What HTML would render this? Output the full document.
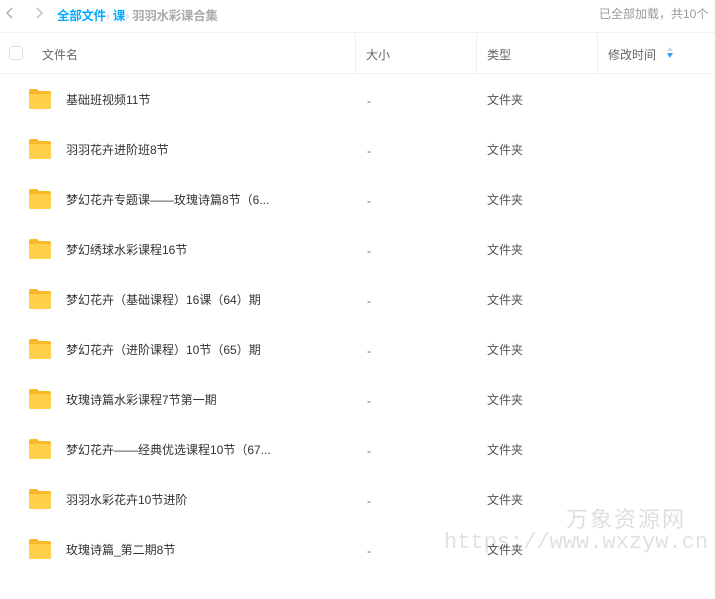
<!DOCTYPE html>
<html><head><meta charset="utf-8"><style>
body{margin:0;width:715px;height:575px;overflow:hidden;background:#fff;font-family:"Liberation Sans","Noto Sans CJK SC",sans-serif;font-size:12px;color:#333;position:relative}
.a{position:absolute;white-space:nowrap}
.row{position:absolute;left:0;width:715px;height:50px}
.fold{position:absolute;left:28px;top:-11px;width:24px;height:21px}
</style></head><body>
<svg class="a" style="left:4px;top:6px" width="40" height="14"><path d="M8 2 L3 7 L8 12" stroke="#aaa" stroke-width="1.3" fill="none"/><path d="M33 2 L38 7 L33 12" stroke="#bbb" stroke-width="1.3" fill="none"/></svg>
<div class="a" style="left:57px;top:5px;font-size:12.5px;font-weight:bold;color:#09aaff;letter-spacing:-0.3px">全部文件<span style="color:#ccc;font-weight:normal">›</span> 课<span style="color:#ccc;font-weight:normal">›</span> <span style="color:#aaa">羽羽水彩课合集</span></div>
<div class="a" style="left:599px;top:5px;font-size:12px;color:#999">已全部加载，共10个</div>
<div class="a" style="left:0;top:32px;width:715px;height:1px;background:#f0f0f0"></div>
<div class="a" style="left:0;top:73px;width:715px;height:1px;background:#f2f2f2"></div>
<div class="a" style="left:355px;top:33px;width:1px;height:40px;background:#f0f0f0"></div>
<div class="a" style="left:476px;top:33px;width:1px;height:40px;background:#f0f0f0"></div>
<div class="a" style="left:597px;top:33px;width:1px;height:40px;background:#f0f0f0"></div>
<div class="a" style="left:9px;top:46px;width:12px;height:12px;border:1px solid #ddd;border-radius:3px"></div>
<div class="a" style="left:42px;top:46px;color:#666">文件名</div>
<div class="a" style="left:366px;top:46px;color:#666">大小</div>
<div class="a" style="left:487px;top:46px;color:#666">类型</div>
<div class="a" style="left:608px;top:46px;color:#666">修改时间</div>
<svg class="a" style="left:666px;top:47px" width="8" height="12"><path d="M4 0L7 4H1Z" fill="#c6d8ea"/><path d="M4 11L7 6H1Z" fill="#3a9df8"/></svg>
<div id="rows"></div>
<script>
var n=["基础班视频11节","羽羽花卉进阶班8节","梦幻花卉专题课——玫瑰诗篇8节（6...","梦幻绣球水彩课程16节","梦幻花卉（基础课程）16课（64）期","梦幻花卉（进阶课程）10节（65）期","玫瑰诗篇水彩课程7节第一期","梦幻花卉——经典优选课程10节（67...","羽羽水彩花卉10节进阶","玫瑰诗篇_第二期8节"];
var h="";n.forEach(function(t,i){var y=99+i*50;h+='<div class="row" style="top:'+y+'px"><svg class="fold" viewBox="0 0 24 21"><path d="M1 3a2 2 0 0 1 2-2h6l2 2h10a2 2 0 0 1 2 2v14a2 2 0 0 1-2 2H3a2 2 0 0 1-2-2z" fill="#f7b928"/><path d="M1 6h22v13a2 2 0 0 1-2 2H3a2 2 0 0 1-2-2z" fill="#ffd04c"/></svg><div class="a" style="left:66px;top:-8px">'+t+'</div><div class="a" style="left:367px;top:-5px;color:#666">-</div><div class="a" style="left:487px;top:-8px;color:#555">文件夹</div></div>';});
document.getElementById("rows").innerHTML=h;
</script>
<div class="a" style="left:566px;top:502px;font-size:22px;color:rgba(0,0,0,0.13);letter-spacing:2px">万象资源网</div>
<div class="a" style="left:444px;top:530px;font-size:22px;font-family:'Liberation Mono',monospace;color:rgba(0,0,0,0.12)">https://www.wxzyw.cn</div>
</body></html>
